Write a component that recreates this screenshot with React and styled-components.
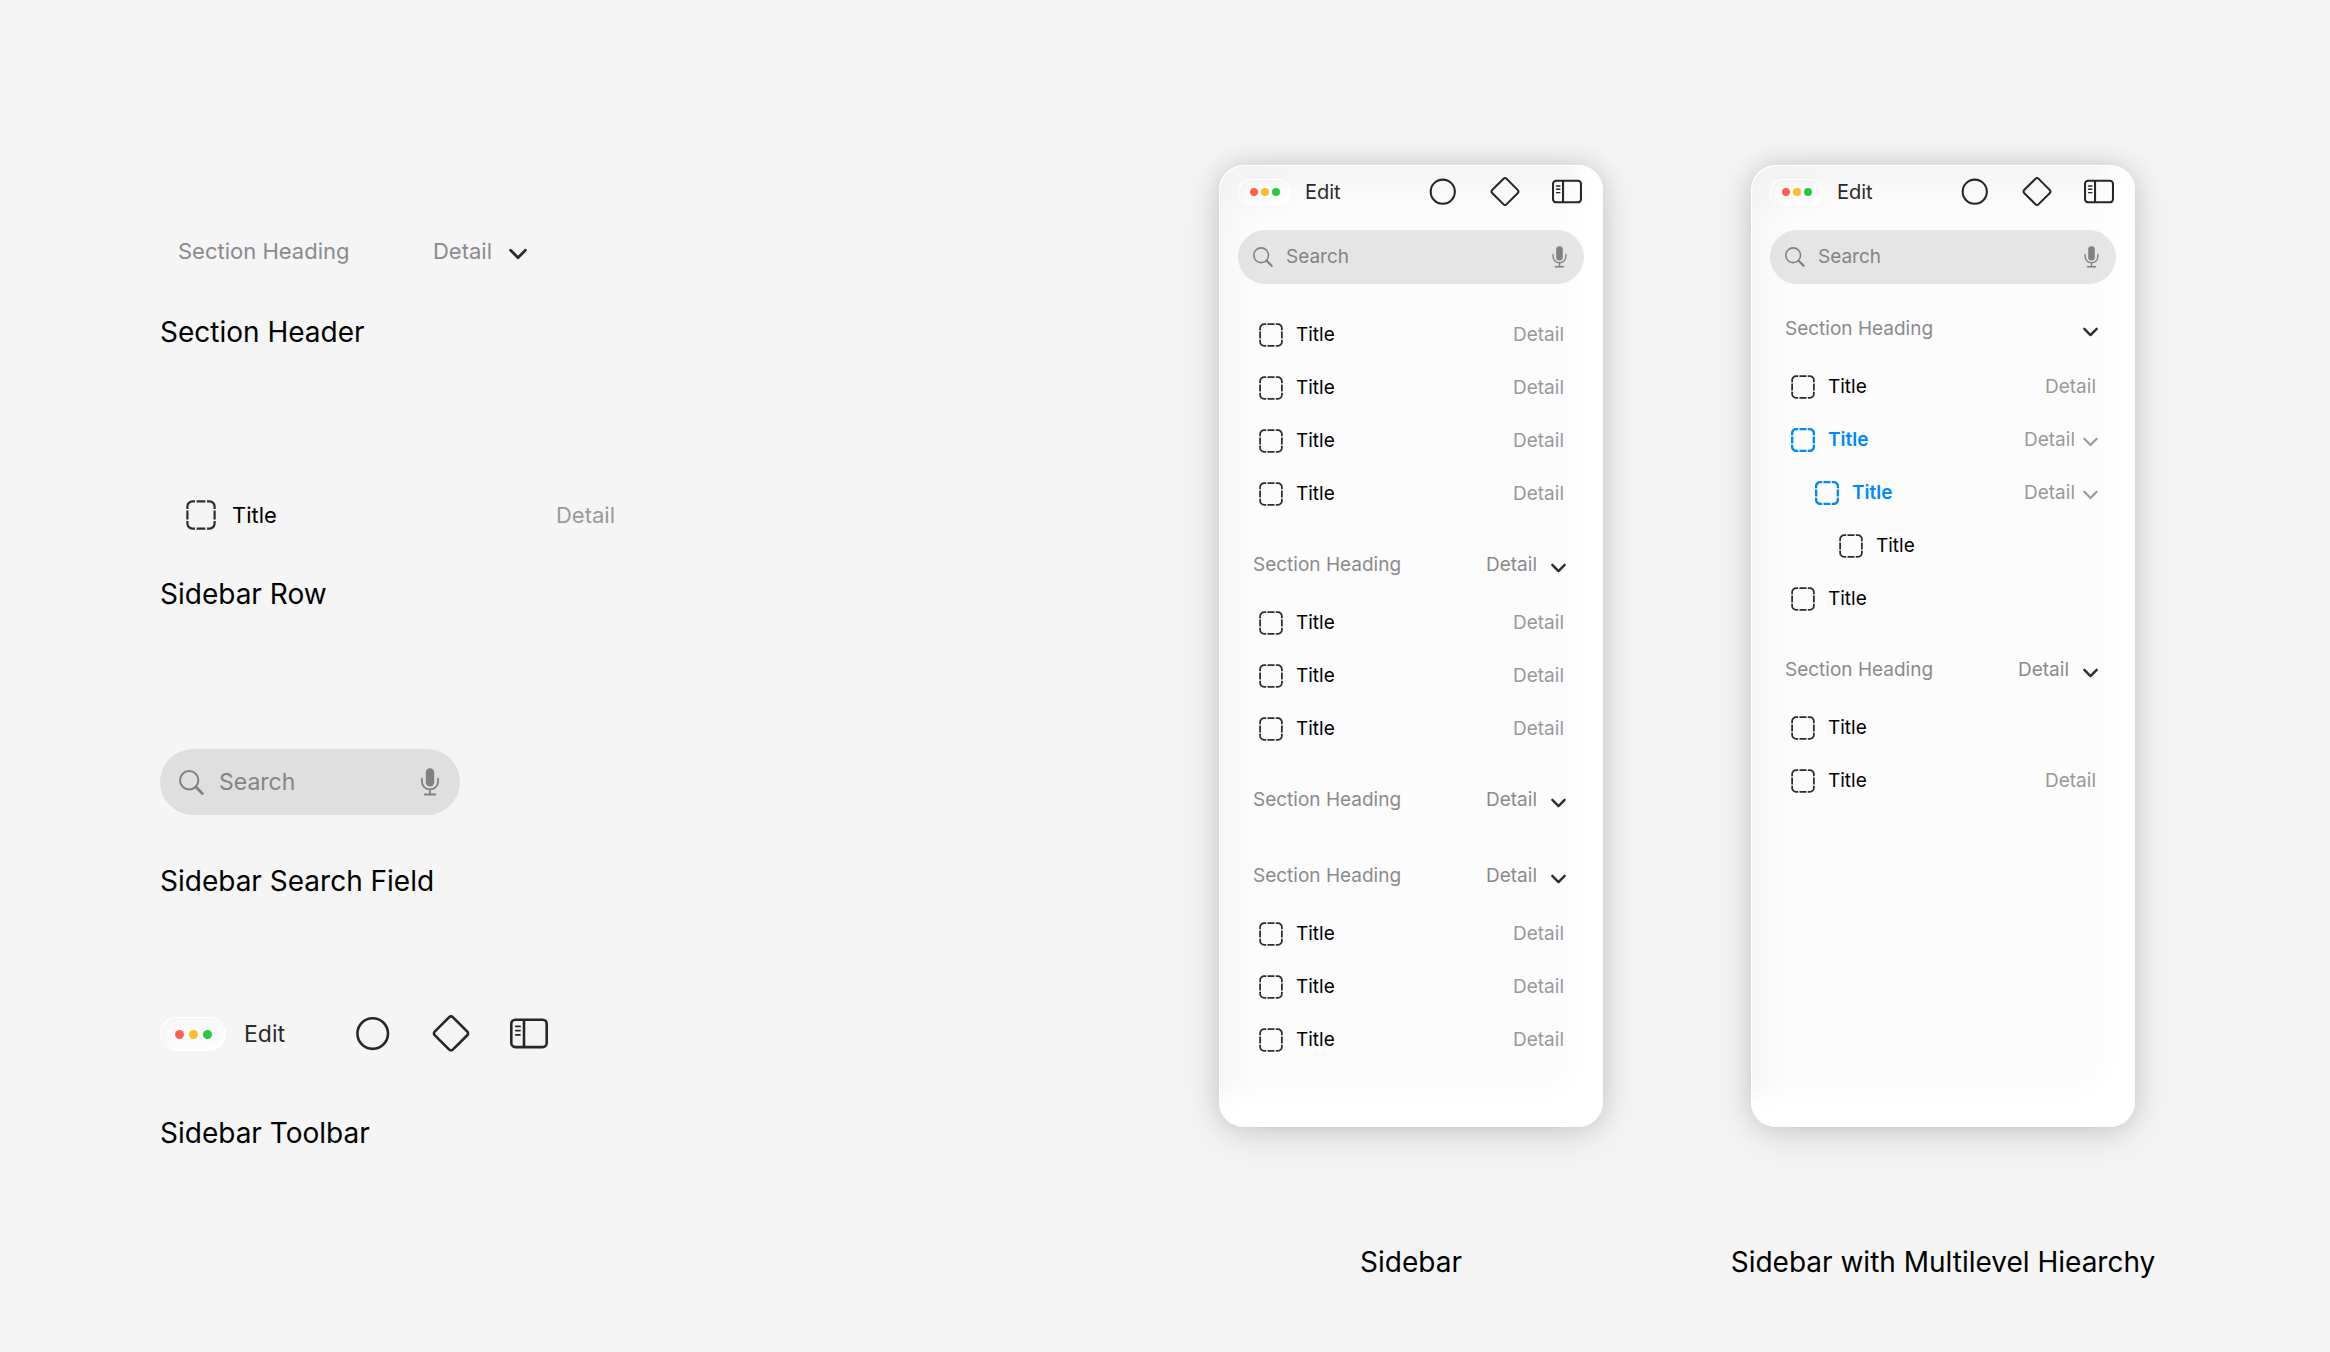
import { createGlobalStyle, css, styled } from "styled-components";

const GlobalStyle = createGlobalStyle`
    *, *::before, *::after {
        box-sizing: border-box;
    }
    body {
        margin: 0;
        background-color: #f5f5f5;
        color: #000;
        font-family: Inter, "Liberation Sans", sans-serif;
    }
    button, input {
        font: inherit;
        color: inherit;
    }
`;

const Board = styled.main`
    display: flex;
    justify-content: space-between;
    gap: 80px;
    padding: 165px 195px 70px 160px;
`;
const Parts = styled.div`
    display: flex;
    flex-direction: column;
    padding-top: 53px;
`;
const Part = styled.section`
    display: flex;
    flex-direction: column;
    gap: ${(props) => props.$gap}px;
    margin-bottom: ${(props) => props.$after}px;
`;
const PartBody = styled.div`
    width: ${(props) => props.$width}px;
    height: 66px;
    display: grid;
    grid-template-columns: minmax(0, 1fr);
    align-items: center;
`;
const Caption = styled.h2`
    margin: 0;
    font-size: 28px;
    line-height: 40px;
    font-weight: 400;
    white-space: nowrap;
`;
const Examples = styled.div`
    display: flex;
    gap: 148px;
`;
const Example = styled.section`
    width: 384px;
    display: flex;
    flex-direction: column;
    align-items: center;
    gap: 115px;
`;
const Panel = styled.aside`
    width: 100%;
    flex: 1;
    padding-bottom: 61px;
    border-radius: 25px;
    background-color: #fcfcfc;
    box-shadow:
        inset 1px 1px 0 #fff,
        inset -40px -46px 24px -14px #fff,
        inset 22px 30px 44px -14px rgba(0, 0, 0, 0.045),
        0 8px 44px rgba(0, 0, 0, 0.12),
        0 0 24px rgba(0, 0, 0, 0.12);
`;
const PanelInner = styled.div`
    padding: 0 19px;
`;

const Bar = styled.div`
    display: flex;
    align-items: center;
    height: 54px;
    padding-right: ${(props) => (props.$large ? 0 : 2)}px;
`;
const Lights = styled.span`
    display: flex;
    align-items: center;
    justify-content: center;
    gap: ${(props) => (props.$large ? 5 : 3)}px;
    width: ${(props) => (props.$large ? 66 : 53)}px;
    height: ${(props) => (props.$large ? 34 : 26)}px;
    margin-right: ${(props) => (props.$large ? 18 : 14)}px;
    border-radius: 17px;
    background-color: #fbfbfb;
    box-shadow:
        inset 1px 1px 0 #fff,
        inset -3px -3px 4px #fff,
        inset 3px 3px 8px rgba(0, 0, 0, 0.04),
        0 5px 30px rgba(0, 0, 0, 0.02);
`;
const Light = styled.i`
    width: ${(props) => (props.$large ? 9 : 8)}px;
    height: ${(props) => (props.$large ? 9 : 8)}px;
    border-radius: 50%;
    background-color: ${(props) => props.$color};
`;
const PlainButton = styled.button`
    display: flex;
    padding: 0;
    border: 0;
    background: none;
    cursor: pointer;
`;
const EditButton = styled(PlainButton)`
    color: #2a2a2a;
    font-size: ${(props) => (props.$large ? 23 : 20)}px;
    line-height: 32px;
`;
const Tools = styled.div`
    display: flex;
    margin-left: auto;
    gap: ${(props) => (props.$large ? 40 : 32)}px;
    color: #262626;

    svg {
        width: ${(props) => (props.$large ? 38 : 30)}px;
        height: ${(props) => (props.$large ? 38 : 30)}px;
    }
`;

const SearchBox = styled.label`
    display: flex;
    align-items: center;
    height: ${(props) => (props.$large ? 66 : 54)}px;
    margin-top: ${(props) => (props.$large ? 0 : 11)}px;
    padding: 0 ${(props) => (props.$large ? 21 : 17)}px 0 ${(props) => (props.$large ? 19 : 15)}px;
    border-radius: 33px;
    background-color: ${(props) => (props.$large ? "#dfdfdf" : "rgba(0, 0, 0, 0.09)")};
    color: #808080;
`;
const SearchInput = styled.input`
    flex: 1;
    min-width: 0;
    margin: 0 ${(props) => (props.$large ? 15 : 13)}px;
    padding: 0;
    border: 0;
    outline: 0;
    background: none;
    font-size: ${(props) => (props.$large ? 23 : 19)}px;
    line-height: 32px;

    &::placeholder {
        color: #848484;
        opacity: 1;
    }
`;
const SearchGlyph = styled.svg`
    flex: none;
    width: ${(props) => (props.$large ? 25 : 20)}px;
    height: ${(props) => (props.$large ? 25 : 20)}px;
`;
const MicGlyph = styled.svg`
    width: ${(props) => (props.$large ? 18 : 15)}px;
    height: ${(props) => (props.$large ? 28 : 22)}px;
`;

const List = styled.ul`
    margin: 0;
    padding: ${(props) => (props.$spaced ? 24 : 0)}px 0 0;
    list-style: none;
`;
const large = css`
    height: 66px;
    padding: 0 18px;
    font-size: 22px;
`;
const HeadingLine = styled.div`
    display: flex;
    align-items: center;
    height: 76px;
    padding: 14px 18px 0 15px;
    color: #8a8a8d;
    font-size: 19px;
    line-height: 32px;
    white-space: nowrap;
    ${(props) => props.$large && large}
`;
const RowLine = styled.div`
    display: flex;
    align-items: center;
    height: 53px;
    padding: 0 ${(props) => (props.$open ? 18 : 20)}px 0 ${(props) => 21 + props.$level * 24}px;
    font-size: 19px;
    line-height: 32px;
    ${(props) => props.$large && large}
    ${(props) => props.$large && "padding-left: 26px;"}
`;
const RowTitle = styled.span`
    margin-left: ${(props) => (props.$large ? 16 : 13)}px;
    color: ${(props) => (props.$active ? "#0088ff" : "#000")};
    font-weight: ${(props) => (props.$active ? 600 : 400)};
`;
const Detail = styled.span`
    margin-left: auto;
    color: ${(props) => props.$color || "#999"};
`;
const Toggle = styled(PlainButton)`
    margin-left: ${(props) => props.$space}px;
    color: ${(props) => (props.$muted ? "#999" : "#2c2c2c")};

    svg {
        width: ${(props) => (props.$large ? 18 : 15)}px;
        height: ${(props) => (props.$large ? 18 : 15)}px;
    }
`;
const SquareGlyph = styled.svg`
    flex: none;
    width: ${(props) => (props.$large ? 30 : 24)}px;
    height: ${(props) => (props.$large ? 30 : 24)}px;
    color: ${(props) => (props.$active ? "#0088ff" : "#2c2c2c")};
`;

function DashedSquare({ $large, $active }) {
    return (
        <SquareGlyph $large={$large} $active={$active} viewBox="0 0 30 30" fill="none" stroke="currentColor" strokeWidth={$active ? 3 : 2.2} aria-hidden="true">
            <path d="M1.4 9V6.4a5 5 0 0 1 5-5H9M10.6 1.4h8.8M21 1.4h2.6a5 5 0 0 1 5 5V9M28.6 10.6v8.8M28.6 21v2.6a5 5 0 0 1-5 5H21M19.4 28.6h-8.8M9 28.6H6.4a5 5 0 0 1-5-5V21M1.4 19.4v-8.8" />
        </SquareGlyph>
    );
}

function Chevron({ $muted }) {
    return (
        <svg viewBox="0 0 18 18" fill="none" stroke="currentColor" strokeWidth={$muted ? 2.6 : 2.8} strokeLinecap="round" strokeLinejoin="round" aria-hidden="true">
            <path d="M1.6 8.2 9 15.7l7.4-7.5" />
        </svg>
    );
}

function Toolbar({ $large }) {
    return (
        <Bar $large={$large}>
            <Lights $large={$large}>
                <Light $large={$large} $color="#ff5f57" />
                <Light $large={$large} $color="#febc2e" />
                <Light $large={$large} $color="#28c840" />
            </Lights>
            <EditButton $large={$large} type="button">Edit</EditButton>
            <Tools $large={$large}>
                <PlainButton type="button" aria-label="Circle">
                    <svg viewBox="0 0 38 38" fill="none" stroke="currentColor" strokeWidth="2.6">
                        <circle cx="18.7" cy="18.6" r="15.3" />
                    </svg>
                </PlainButton>
                <PlainButton type="button" aria-label="Diamond">
                    <svg viewBox="0 0 38 38" fill="none" stroke="currentColor" strokeWidth="2.6">
                        <path d="M17.2 2.1a2.5 2.5 0 0 1 3.6 0l14.5 14.5a2.5 2.5 0 0 1 0 3.6L20.8 34.7a2.5 2.5 0 0 1-3.6 0L2.7 20.2a2.5 2.5 0 0 1 0-3.6Z" />
                    </svg>
                </PlainButton>
                <PlainButton type="button" aria-label="Toggle sidebar">
                    <svg viewBox="0 0 38 38" fill="none" stroke="currentColor" strokeWidth="2.6">
                        <rect x="1.3" y="4.7" width="35.4" height="27.4" rx="4" />
                        <path d="M14 4.7v27.4" />
                        <path d="M5.8 11.4h4.2M5.8 15.6h4.2M5.8 19.8h4.2" strokeWidth="1.8" strokeLinecap="round" />
                    </svg>
                </PlainButton>
            </Tools>
        </Bar>
    );
}

function Search({ $large }) {
    return (
        <SearchBox $large={$large}>
            <SearchGlyph $large={$large} viewBox="0 0 25 25" fill="none" stroke="currentColor" aria-hidden="true">
                <circle cx="10.2" cy="10.3" r="9.2" strokeWidth="2" />
                <path d="m17 17.1 6.3 6.3" strokeWidth="2.8" strokeLinecap="round" />
            </SearchGlyph>
            <SearchInput $large={$large} type="text" placeholder="Search" aria-label="Search" />
            <PlainButton type="button" aria-label="Dictate">
                <MicGlyph $large={$large} viewBox="0 0 18 28" fill="none" stroke="currentColor" strokeWidth="1.8" strokeLinecap="round">
                    <rect x="4.8" y="0.2" width="8.4" height="18.3" rx="4.2" fill="currentColor" stroke="none" />
                    <path d="M.9 10.7v2.6a8.1 8.1 0 0 0 16.2 0v-2.6M9 21.5v4.8M3.8 26.5h10.4" />
                </MicGlyph>
            </PlainButton>
        </SearchBox>
    );
}

function SectionHeader({ $large, detail = "Detail" }) {
    return (
        <HeadingLine $large={$large}>
            <span>Section Heading</span>
            <Detail $color="#8a8a8d">{detail}</Detail>
            <Toggle $large={$large} $space={$large ? 17 : 14} type="button" aria-label="Collapse section">
                <Chevron />
            </Toggle>
        </HeadingLine>
    );
}

function SidebarRow({ $large, level = 0, active, detail = "Detail" }) {
    return (
        <RowLine $large={$large} $level={level} $open={active}>
            <DashedSquare $large={$large} $active={active} />
            <RowTitle $large={$large} $active={active}>Title</RowTitle>
            <Detail>{detail}</Detail>
            {active && (
                <Toggle $space={8} $muted type="button" aria-label="Collapse row">
                    <Chevron $muted />
                </Toggle>
            )}
        </RowLine>
    );
}

const sidebarItems = [
    {}, {}, {}, {},
    { heading: true },
    {}, {}, {},
    { heading: true },
    { heading: true },
    {}, {}, {},
];

const multilevelItems = [
    { heading: true, detail: "" },
    {},
    { active: true },
    { active: true, level: 1 },
    { level: 2, detail: "" },
    { detail: "" },
    { heading: true },
    { detail: "" },
    {},
];

function Sidebar({ items }) {
    return (
        <Panel>
            <PanelInner>
                <Toolbar />
                <Search />
                <List $spaced={!items[0].heading}>
                    {items.map(({ heading, ...item }, index) => (
                        <li key={index}>
                            {heading ? <SectionHeader {...item} /> : <SidebarRow {...item} />}
                        </li>
                    ))}
                </List>
            </PanelInner>
        </Panel>
    );
}

export default function App() {
    return (
        <>
            <GlobalStyle />
            <Board>
                <Parts>
                    <Part $gap={28} $after={130}>
                        <PartBody $width={385}><SectionHeader $large /></PartBody>
                        <Caption>Section Header</Caption>
                    </Part>
                    <Part $gap={26} $after={135}>
                        <PartBody $width={473}><SidebarRow $large /></PartBody>
                        <Caption>Sidebar Row</Caption>
                    </Part>
                    <Part $gap={46} $after={100}>
                        <PartBody $width={300}><Search $large /></PartBody>
                        <Caption>Sidebar Search Field</Caption>
                    </Part>
                    <Part $gap={46} $after={0}>
                        <PartBody $width={388}><Toolbar $large /></PartBody>
                        <Caption>Sidebar Toolbar</Caption>
                    </Part>
                </Parts>
                <Examples>
                    <Example>
                        <Sidebar items={sidebarItems} />
                        <Caption>Sidebar</Caption>
                    </Example>
                    <Example>
                        <Sidebar items={multilevelItems} />
                        <Caption>Sidebar with Multilevel Hiearchy</Caption>
                    </Example>
                </Examples>
            </Board>
        </>
    );
}
